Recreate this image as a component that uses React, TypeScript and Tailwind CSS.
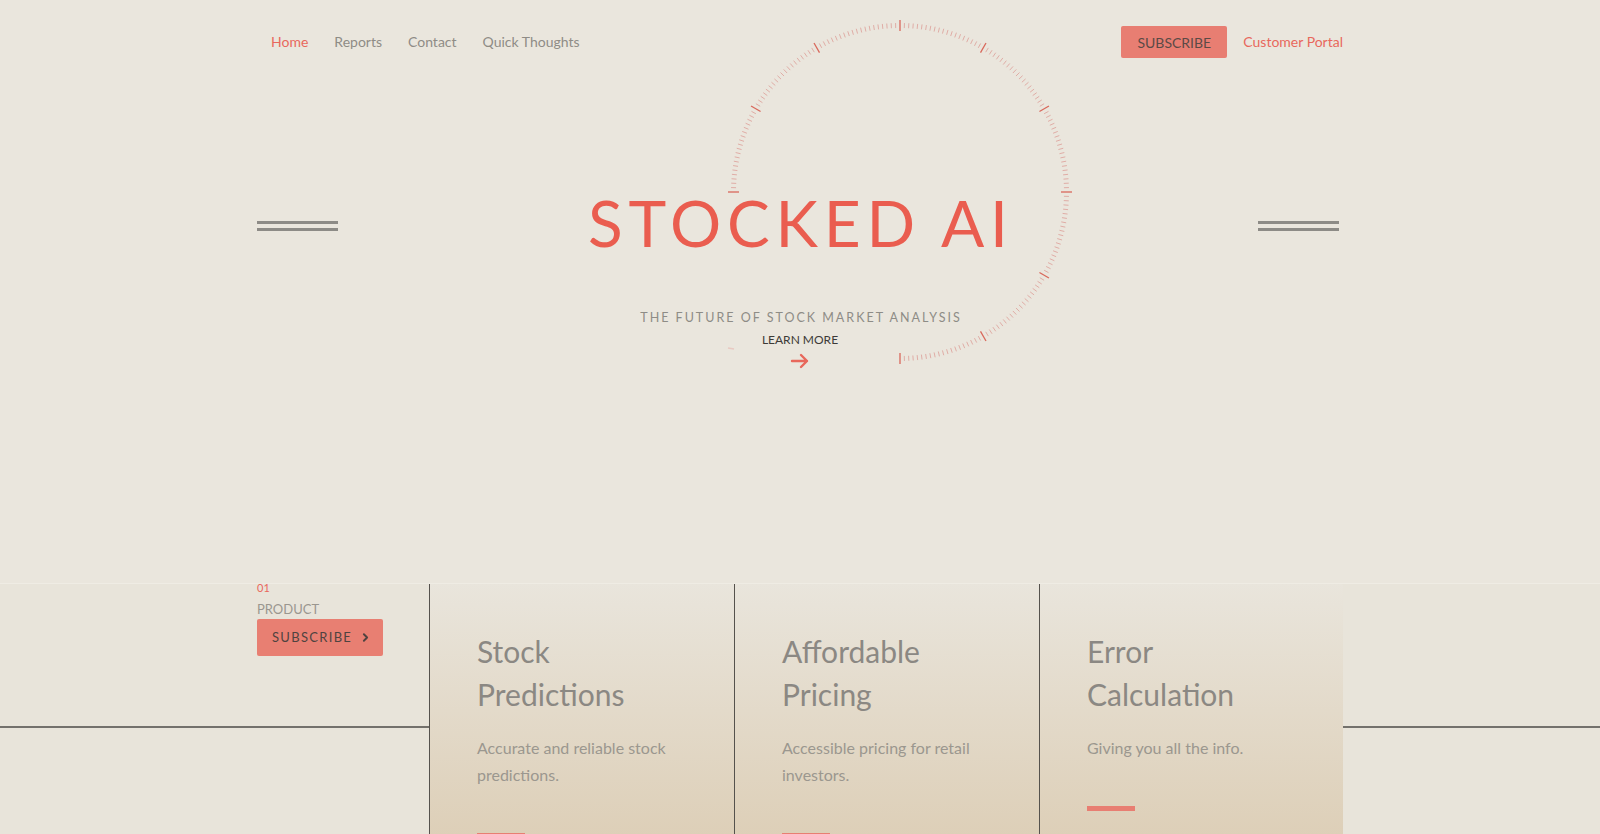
import { ChevronRight } from 'lucide-react'

const navLinks = ['Home', 'Reports', 'Contact', 'Quick Thoughts']

const features = [
  { title: ['Stock', 'Predictions'], text: 'Accurate and reliable stock predictions.' },
  { title: ['Affordable', 'Pricing'], text: 'Accessible pricing for retail investors.' },
  { title: ['Error', 'Calculation'], text: 'Giving you all the info.' },
]

function Dial() {
  const cx = 180
  const cy = 180
  const ticks = []
  for (let deg = -90; deg <= 180; deg += 1.5) {
    const major = deg % 30 === 0
    const rad = ((deg - 90) * Math.PI) / 180
    const r1 = major ? 161 : 164
    const r2 = major ? 172 : 169
    ticks.push(
      <line
        key={deg}
        x1={cx + r1 * Math.cos(rad)}
        y1={cy + r1 * Math.sin(rad)}
        x2={cx + r2 * Math.cos(rad)}
        y2={cy + r2 * Math.sin(rad)}
        stroke={major ? '#d9685b' : '#e0ada6'}
        strokeWidth={major ? 1.3 : 1}
      />
    )
  }
  return (
    <svg width="360" height="360" viewBox="0 0 360 360" className="absolute left-1/2 top-[12px] ml-[-80px] pointer-events-none">
      {ticks}
      <line x1="8" y1="336" x2="14" y2="337" stroke="#e8b7b0" strokeWidth="1.5" opacity="0.6" />
    </svg>
  )
}

function Burger() {
  return (
    <div className="flex flex-col gap-[4px] w-[81px] mt-[5px]">
      <span className="block h-[3px] bg-[#8d8b86]" />
      <span className="block h-[3px] bg-[#8d8b86]" />
    </div>
  )
}

export default function App() {
  return (
    <div className="min-h-screen bg-[#e8e4da] font-['Lato',sans-serif] overflow-hidden">
      {/* Hero */}
      <section className="relative h-[583px] bg-[#eae6dd]">
        <Dial />
        <div className="relative w-[1086px] mx-auto">
          <header className="flex items-center justify-between pt-[26px]">
            <nav className="flex items-center gap-[26px] pl-[14px] text-[14px] -mt-[2px]">
              {navLinks.map((link, i) => (
                <a key={link} href="#" className={i === 0 ? 'text-[#e8685c]' : 'text-[#8f8c86]'}>
                  {link}
                </a>
              ))}
            </nav>
            <div className="flex items-center gap-[16px]">
              <button className="h-[32px] w-[106px] rounded-[2px] bg-[#e87e72] text-[14px] text-[#5b4a46]">
                SUBSCRIBE
              </button>
              <a href="#" className="text-[14px] text-[#e8685c] -mt-[2px]">Customer Portal</a>
            </div>
          </header>

          <div className="flex items-center justify-between mt-[125px] h-[80px]">
            <Burger />
            <h1 className="text-[64px] leading-[80px] tracking-[0.09em] text-[#ea5d4f] pl-[0.09em]">
              STOCKED AI
            </h1>
            <div className="pr-[4px]">
              <Burger />
            </div>
          </div>

          <div className="flex flex-col items-center">
            <p className="mt-[49px] text-[12.5px] leading-none tracking-[0.16em] pl-[0.16em] text-[#8e8c86]">
              THE FUTURE OF STOCK MARKET ANALYSIS
            </p>
            <a href="#" className="mt-[9px] text-[12px] leading-none text-[#3d3a37]">LEARN MORE</a>
            <svg width="20" height="20" viewBox="0 0 20 20" className="mt-[5px]" fill="none" stroke="#e8685c" strokeWidth="2.4" strokeLinecap="round" strokeLinejoin="round">
              <path d="M2 10h15M11 4l6 6-6 6" />
            </svg>
          </div>
        </div>
      </section>

      {/* Products */}
      <section className="relative border-t border-[#efece4] bg-[#e8e4da]">
        <div className="absolute left-0 right-0 top-[142px] h-[2px] bg-[#73716c]" />
        <div className="relative w-[1086px] mx-auto grid grid-cols-[172px_305px_305px_304px]">
          <div className="-mt-[2px]">
            <p className="text-[11px] leading-none text-[#e8685c]">01</p>
            <p className="mt-[10px] text-[13px] leading-none text-[#9a968f]">PRODUCT</p>
            <button className="mt-[3px] flex items-center h-[37px] w-[126px] rounded-[2px] bg-[#e87f72] pl-[15px] text-[13px] tracking-[0.1em] text-[#4f4340]">
              SUBSCRIBE
              <ChevronRight className="ml-[7px] w-[13px] h-[13px]" strokeWidth={3.5} />
            </button>
          </div>
          {features.map((f) => (
            <div
              key={f.title[0]}
              className="relative z-10 h-[300px] border-l border-[#55524d] bg-gradient-to-b from-[#e9e5dc] to-[#dbcbb1] pl-[47px] pr-[40px] pt-[46px]"
            >
              <h3 className="text-[30px] leading-[43px] text-[#8b8883]">
                {f.title[0]}
                <br />
                {f.title[1]}
              </h3>
              <p className="mt-[18px] text-[16px] leading-[27px] text-[#9b978f]">{f.text}</p>
              <div className="mt-[45px] h-[5px] w-[48px] bg-[#e87e72]" />
            </div>
          ))}
        </div>
      </section>
    </div>
  )
}
